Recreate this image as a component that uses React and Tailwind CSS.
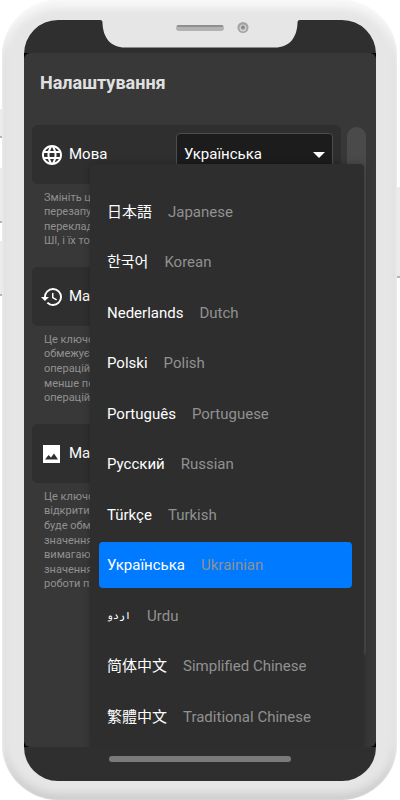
import { useState } from "react";
import { MdLanguage, MdHistory } from "react-icons/md";

const languages = [
  { id: "ja", name: "日本語", english: "Japanese" },
  { id: "ko", name: "한국어", english: "Korean" },
  { id: "nl", name: "Nederlands", english: "Dutch" },
  { id: "pl", name: "Polski", english: "Polish" },
  { id: "pt", name: "Português", english: "Portuguese" },
  { id: "ru", name: "Русский", english: "Russian" },
  { id: "tr", name: "Türkçe", english: "Turkish" },
  { id: "uk", name: "Українська", english: "Ukrainian" },
  { id: "ur", name: "اردو", english: "Urdu" },
  { id: "zh-Hans", name: "简体中文", english: "Simplified Chinese" },
  { id: "zh-Hant", name: "繁體中文", english: "Traditional Chinese" },
];

const PictureIcon = ({ className }) => (
  <svg viewBox="0 0 24 24" className={className} aria-hidden="true">
    <path
      fill="currentColor"
      fillRule="evenodd"
      d="M3 3H20V21H3ZM5 17.500H18L14 11.500L11 15.500L8.500 13Z"
    />
  </svg>
);

const SettingRow = ({ icon: Icon, label, htmlFor, children }) => (
  <div className="flex h-[59px] items-center rounded-md bg-[#2f2f2f] px-2">
    <Icon className="size-6 shrink-0 text-white" />
    <label htmlFor={htmlFor} className="ml-[5px] flex-1 text-[15px] text-white">
      {label}
    </label>
    {children}
  </div>
);

const Note = ({ lines, className }) => (
  <p
    className={`mt-1.5 flex flex-col pl-3 text-[11px] leading-none text-[#919191] ${className}`}
  >
    {lines.map((line, i) => (
      <span key={i} className="flex flex-1 items-center">
        {line}
      </span>
    ))}
  </p>
);

const LanguageMenu = ({ selected, onSelect }) => (
  <ul className="absolute top-[111px] right-3 bottom-0 left-[66px] flex flex-col rounded-t bg-[#2e2e2e] pt-[23px] pr-3 pb-[5px] pl-[9px] shadow-[0_0_8px_rgba(0,0,0,0.25)]">
    {languages.map((lang) => (
      <li key={lang.id} className="flex flex-1 items-center">
        <button
          type="button"
          onClick={() => onSelect(lang.id)}
          className={`flex h-[46px] w-full items-center gap-4 rounded px-2 text-left text-[15px] ${
            lang.id === selected ? "bg-[#007aff]" : ""
          }`}
        >
          <span
            lang={lang.id}
            className={`text-white ${lang.id === "ur" ? "text-[10px]" : ""}`}
          >
            {lang.name}
          </span>
          <span className="text-[#919191]">{lang.english}</span>
        </button>
      </li>
    ))}
  </ul>
);

const Notch = () => (
  <svg viewBox="0 0 200 28" className="mx-auto h-7 w-[200px]" aria-hidden="true">
    <path
      d="M0 0C2 0 2.500 1 2.500 3C3 18 11 27.500 25 27.500H175C189 27.500 197 18 197.500 3C197.500 1 198 0 200 0Z"
      fill="#e6e6e6"
    />
    <rect x="76" y="5" width="48" height="6" rx="3" fill="#b2b2b2" />
    <rect x="77" y="5" width="46" height="2" rx="1" fill="#8f8f8f" />
    <circle cx="143" cy="7.500" r="5.500" fill="#a3a3a3" />
    <circle cx="143" cy="8" r="3.500" fill="#cfcfcf" />
    <circle cx="143" cy="7.500" r="2" fill="#8a8a8a" />
  </svg>
);

const SideButton = ({ className }) => (
  <div
    className={`absolute border-b-2 border-[#b5b5b5] bg-[#ebebeb] ${className}`}
  />
);

export default function App() {
  const [language, setLanguage] = useState("uk");

  return (
    <div className="relative bg-white font-['Roboto','Noto_Sans_CJK_JP',sans-serif]">
      <SideButton className="top-[109px] left-0 h-[29px] w-[3px]" />
      <SideButton className="top-[168px] left-0 h-[55px] w-[3px]" />
      <SideButton className="top-[241px] left-0 h-[55px] w-[3px]" />
      <SideButton className="top-[187px] right-0 h-[91px] w-[4px]" />

      {/* Phone frame */}
      <div className="relative mr-[3px] ml-[2px] rounded-[56px] bg-[#e6e6e6] pt-5 pr-[21px] pb-[19px] pl-[22px] shadow-[inset_0_8px_8px_rgba(255,255,255,0.7),inset_0_-6px_10px_rgba(0,0,0,0.12),inset_0_0_3px_rgba(255,255,255,0.8)]">
        <div className="overflow-hidden rounded-[34px] bg-[#2f2f2f]">
          <div className="h-[33px]">
            <Notch />
          </div>

          <div className="bg-black">
            <main className="relative min-h-[694px] overflow-hidden rounded-md bg-[#383838] px-2">
              <h1 className="h-[72px] px-2 pt-4 text-lg font-bold text-[#e0e0e0]">
                Налаштування
              </h1>

              <div className="flex pr-0.5">
                <div className="flex flex-1 flex-col gap-[19px]">
                  <section>
                    <SettingRow icon={MdLanguage} label="Мова" htmlFor="language">
                      <div className="relative">
                        <select
                          id="language"
                          value={language}
                          onChange={(e) => setLanguage(e.target.value)}
                          className="h-11 w-[157px] appearance-none rounded border border-[#4d4d4d] bg-[#1c1c1c] pl-[7px] text-[15px] text-white"
                        >
                          {languages.map((lang) => (
                            <option key={lang.id} value={lang.id}>
                              {lang.name}
                            </option>
                          ))}
                        </select>
                        <svg
                          viewBox="0 0 12 6"
                          className="pointer-events-none absolute top-[19px] right-2 h-1.5 w-3"
                          aria-hidden="true"
                        >
                          <path d="M0 0H12L6 6Z" fill="#fff" />
                        </svg>
                      </div>
                    </SettingRow>
                    <Note
                      className="h-[58px]"
                      lines={["Змініть це", "перезапу", "переклад", "ШІ, і їх точ"]}
                    />
                  </section>

                  <section>
                    <SettingRow icon={MdHistory} label="Ма" />
                    <Note
                      className="h-[73px]"
                      lines={["Це ключо", "обмежує", "операцій", "менше по", "операцій,"]}
                    />
                  </section>

                  <section>
                    <SettingRow icon={PictureIcon} label="Ма" />
                    <Note
                      className="h-[102px]"
                      lines={[
                        "Це ключо",
                        "відкритих",
                        "буде обме",
                        "значення",
                        "вимагают",
                        "значення",
                        "роботи пр",
                      ]}
                    />
                  </section>
                </div>

                {/* Scrollbar */}
                <div className="mt-0.5 ml-1.5 h-[533px] w-[19px] rounded-full bg-[#4a4a4a]" />
              </div>

              <LanguageMenu selected={language} onSelect={setLanguage} />
            </main>
          </div>

          {/* Home indicator */}
          <div className="flex h-[34px] justify-center pt-[9px]">
            <div className="h-1.5 w-[182px] rounded-full bg-[#7b7b7b]" />
          </div>
        </div>
      </div>
    </div>
  );
}
